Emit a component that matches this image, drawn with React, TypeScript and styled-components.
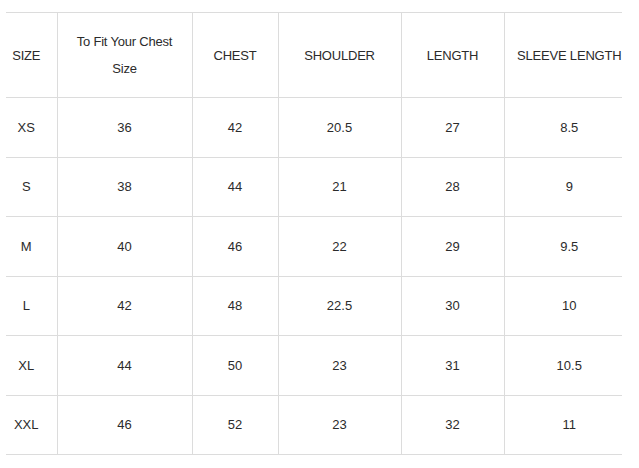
import styled, { createGlobalStyle } from 'styled-components';

const GlobalStyle = createGlobalStyle`
  html, body {
    margin: 0;
    padding: 0;
    background: #fff;
  }
  body {
    font-family: 'Liberation Sans', Arial, sans-serif;
    color: #2b2b2b;
  }
`;

const columns = [
  { label: 'SIZE', width: 51 },
  { label: 'To Fit Your Chest Size', width: 135, wrap: true },
  { label: 'CHEST', width: 86 },
  { label: 'SHOULDER', width: 123 },
  { label: 'LENGTH', width: 103 },
  { label: 'SLEEVE LENGTH', width: 118 },
];

const rows = [
  ['XS', '36', '42', '20.5', '27', '8.5'],
  ['S', '38', '44', '21', '28', '9'],
  ['M', '40', '46', '22', '29', '9.5'],
  ['L', '42', '48', '22.5', '30', '10'],
  ['XL', '44', '50', '23', '31', '10.5'],
  ['XXL', '46', '52', '23', '32', '11'],
];

export default function App() {
  return (
    <>
      <GlobalStyle />
      <Page>
        <Table>
          <colgroup>
            {columns.map((c) => (
              <col key={c.label} style={{ width: c.width }} />
            ))}
          </colgroup>
          <thead>
            <tr>
              {columns.map((c) => (
                <HeadCell key={c.label}>
                  {c.wrap ? (
                    <>
                      To Fit Your Chest
                      <br />
                      Size
                    </>
                  ) : (
                    c.label
                  )}
                </HeadCell>
              ))}
            </tr>
          </thead>
          <tbody>
            {rows.map((r) => (
              <tr key={r[0]}>
                {r.map((v, i) => (
                  <Cell key={i}>{v}</Cell>
                ))}
              </tr>
            ))}
          </tbody>
        </Table>
      </Page>
    </>
  );
}

const Page = styled.div`
  padding: 12px 0 0 6px;
`;

const Table = styled.table`
  width: 616px;
  table-layout: fixed;
  border-collapse: collapse;
  font-size: 13px;

  td,
  th {
    border: 1px solid #dcdcdc;
    text-align: center;
    vertical-align: middle;
    padding: 0;
  }

  tr > :first-child {
    border-left: none;
    padding-right: 10px;
  }

  tr > :last-child {
    border-right: none;
    padding-left: 12px;
  }
`;

const HeadCell = styled.th`
  height: 84px;
  font-weight: normal;
  line-height: 27px;
  white-space: nowrap;
  letter-spacing: -0.2px;
`;

const Cell = styled.td`
  height: 58.5px;
`;
